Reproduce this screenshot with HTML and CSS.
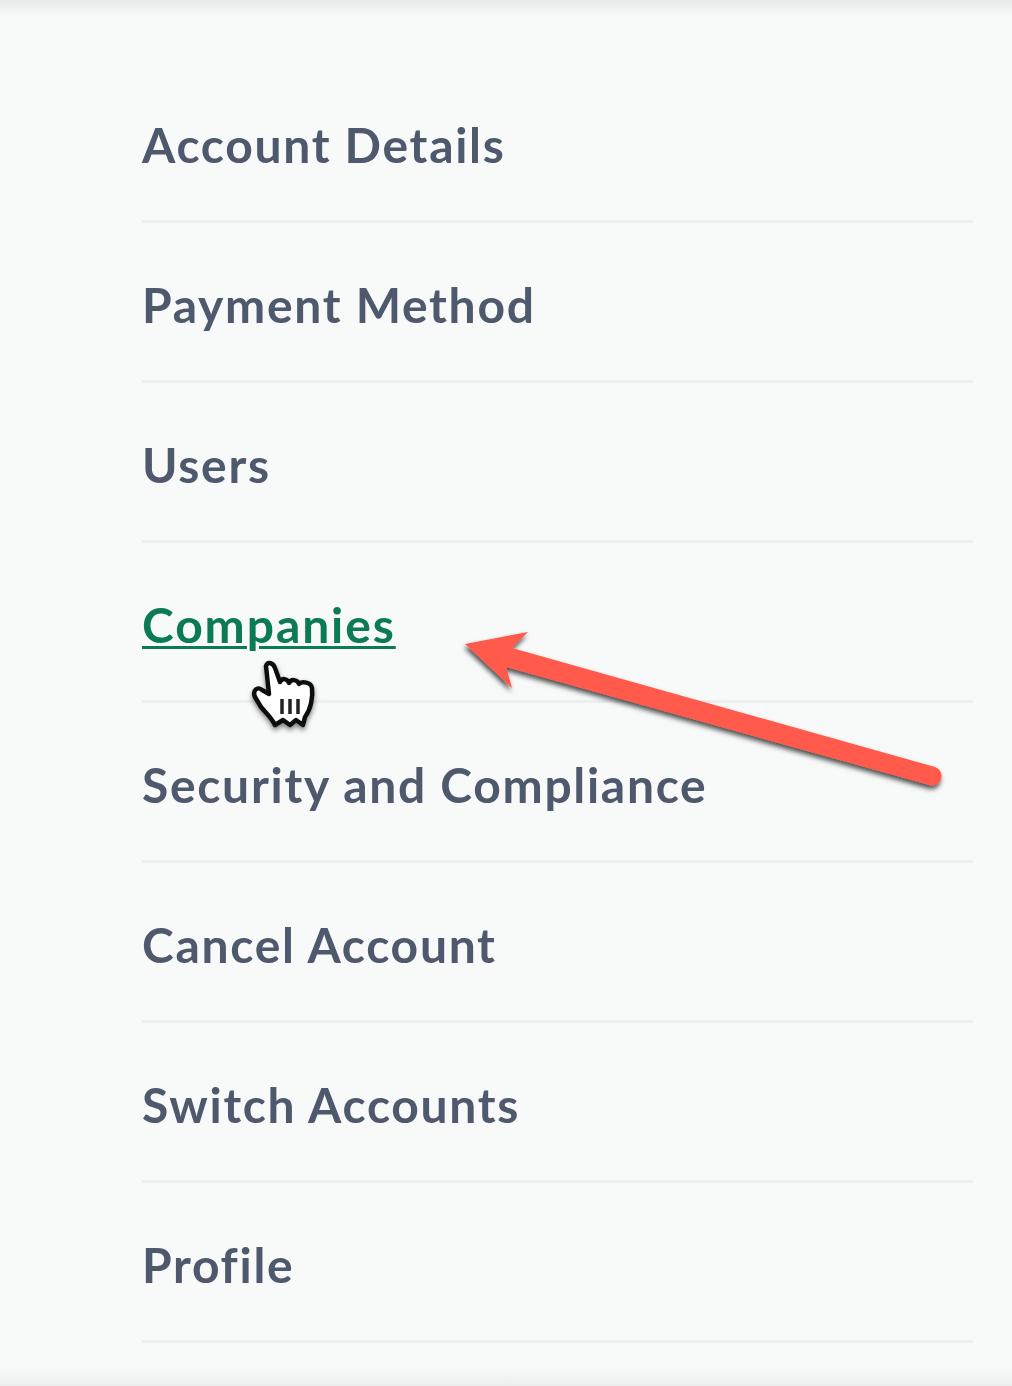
FILE: index.html
```html
<!DOCTYPE html>
<html lang="en">
<head>
<meta charset="utf-8">
<title>Settings menu</title>
<link rel="stylesheet" href="styles.css">
</head>
<body>
<div class="edge edge-top"></div>
<nav class="menu">
  <a class="item" href="#">Account Details</a>
  <a class="item" href="#">Payment Method</a>
  <a class="item" href="#">Users</a>
  <a class="item active" href="#">Companies</a>
  <a class="item" href="#">Security and Compliance</a>
  <a class="item" href="#">Cancel Account</a>
  <a class="item" href="#">Switch Accounts</a>
  <a class="item" href="#">Profile</a>
</nav>
<div class="edge edge-bottom"></div>
<svg class="overlay" viewBox="0 0 1012 1386" aria-hidden="true">
  <defs>
    <filter id="arrowShadow" x="-10%" y="-30%" width="120%" height="160%">
      <feDropShadow dx="-1" dy="3.500" stdDeviation="2.500" flood-color="#000" flood-opacity="0.7"/>
    </filter>
    <filter id="handShadow" x="-30%" y="-30%" width="160%" height="160%">
      <feDropShadow dx="0" dy="3" stdDeviation="2.500" flood-color="#000" flood-opacity="0.5"/>
    </filter>
    <filter id="soft" x="-10%" y="-10%" width="120%" height="120%">
      <feGaussianBlur stdDeviation="0.600"/>
    </filter>
  </defs>
  <path class="arrow" filter="url(#arrowShadow)" d="M465 644 L528 632 L512 648 L935 767 Q942 770 941.500 777 Q940 786 931 785.500 L506 667 L512 688 Z"/>
  <g filter="url(#handShadow)">
    <g filter="url(#soft)">
      <path class="hand" d="M266 666 C268 661 273 663 275 668 L280 682 C282 678 287 678 289 683 C291 679 297 679 299 684 C302 681 311 682 312 688 C313 697 311 709 305 717 L303 725 L296 720 L290 725 L283 720 L275 725 C272 718 266 713 261 707 L255 697 C252 690 258 686 262 690 L269 694 Z"/>
      <path class="hand-lines" d="M282 699 V714 M290 699 V714 M298 699 V714"/>
    </g>
  </g>
</svg>
</body>
</html>
```
FILE: styles.css
```css
html, body {
  margin: 0;
  height: 1386px;
  overflow: hidden;
}
body {
  position: relative;
  background: #f8fafa;
  font-family: "Lato", "Liberation Sans", sans-serif;
}
.edge {
  height: 16px;
}
.edge-top {
  background: linear-gradient(#e9e9e9, #f8fafa);
}
.edge-bottom {
  position: absolute;
  left: 0;
  right: 0;
  bottom: 0;
  background: linear-gradient(#f8fafa, #eceded);
}
.menu {
  display: flex;
  flex-direction: column;
  margin: 47px 39px 0 142px;
  filter: blur(0.5px);
}
.item {
  display: flex;
  align-items: center;
  box-sizing: border-box;
  height: 160px;
  padding-top: 6px;
  border-bottom: 3px solid #edf0f0;
  color: #4e596e;
  font-size: 48px;
  font-weight: 700;
  letter-spacing: 1.700px;
  text-decoration: none;
}
.active {
  color: #0d7a57;
  letter-spacing: 1.900px;
  text-decoration: underline;
  text-decoration-thickness: 3px;
  text-underline-offset: 3px;
}
.overlay {
  position: absolute;
  inset: 0;
  width: 1012px;
  height: 1386px;
}
.arrow {
  fill: #ff5a4b;
}
.hand {
  fill: #fff;
  stroke: #111;
  stroke-width: 4.500;
  stroke-linejoin: round;
}
.hand-lines {
  fill: none;
  stroke: #222;
  stroke-width: 3.500;
}
```
